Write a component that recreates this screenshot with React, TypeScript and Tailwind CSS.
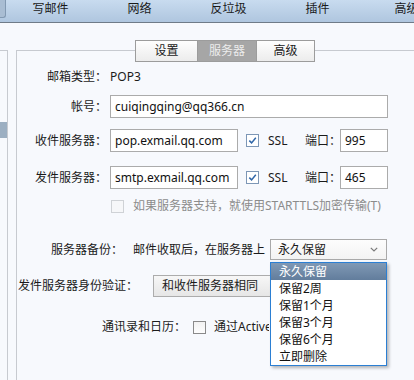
import React from "react";

function Check({ checked, disabled }: { checked?: boolean; disabled?: boolean }) {
  const cls = disabled
    ? "border-[#cfd2d6] bg-[#f6f7f9]"
    : checked
    ? "border-[#7d97b6] bg-white"
    : "border-[#8a8a8a] bg-gradient-to-b from-[#f2f2f2] to-[#fdfdfd]";
  return (
    <span className={`inline-flex h-[13px] w-[13px] shrink-0 items-center justify-center border ${cls}`}>
      {checked && (
        <svg width="9" height="9" viewBox="0 0 9 9">
          <path d="M1.3 4.6 L3.6 6.9 L7.8 1.8" stroke="#2f66a8" strokeWidth="1.5" fill="none" />
        </svg>
      )}
    </span>
  );
}

function Input({ w, value }: { w: string; value: string }) {
  return (
    <div className={`${w} flex h-[23px] shrink-0 items-center border border-[#ababab] bg-white pl-[4px] text-[12px] text-[#111]`}>
      {value}
    </div>
  );
}

export default function App() {
  const nav = ["写邮件", "网络", "反垃圾", "插件", "高级"];
  const options = ["永久保留", "保留2周", "保留1个月", "保留3个月", "保留6个月", "立即删除"];
  return (
    <div className="h-[380px] w-[414px] overflow-hidden bg-[#f7f9fd] font-['Noto_Sans','Noto_Sans_CJK_SC',sans-serif] text-[12px] text-[#1b1b1b]">
      {/* top bar */}
      <div className="flex h-[23px] border-b border-[#6f7b88] bg-gradient-to-b from-[#c8dbef] to-[#afc6df]">
        <div className="h-[18px] w-[6px] shrink-0 rounded-br-[3px] border-b border-r border-[#8299b2] bg-[#a9bdd3]" />
        {nav.map((t) => (
          <div key={t} className="w-[89px] shrink-0 whitespace-nowrap text-center text-[12px] leading-[18px] text-[#1a1a1a]">
            {t}
          </div>
        ))}
      </div>

      {/* body */}
      <div className="flex pt-[27px]">
        <div className="h-[340px] w-[8px] shrink-0 border-r border-t border-[#c7cad0]">
          <div className="mt-[71px] h-[16px] bg-[#9cafc2]" />
        </div>
        <div className="ml-[8px] h-[340px] flex-1 border-l border-t border-[#c7cad0]">
          {/* tabs */}
          <div className="-mt-[11px] ml-[118px] flex h-[22px] w-fit border border-[#9c9c9c]">
            <div className="flex w-[61px] items-center justify-center bg-gradient-to-b from-[#fefefe] to-[#ececec] text-[#1b1b1b]">设置</div>
            <div className="flex w-[59px] items-center justify-center border-l border-[#9c9c9c] bg-[#a6a6a6] text-[#ececec]">服务器</div>
            <div className="flex w-[58px] items-center justify-center border-l border-[#9c9c9c] bg-gradient-to-b from-[#fefefe] to-[#ececec] text-[#1b1b1b]">高级</div>
          </div>

          {/* row 1 */}
          <div className="mt-[5px] flex h-[20px] items-center">
            <div className="w-[90px] text-right">邮箱类型：</div>
            <div className="ml-[3px]">POP3</div>
          </div>

          {/* row 2 */}
          <div className="mt-[8px] flex h-[23px] items-center">
            <div className="w-[90px] text-right">帐号：</div>
            <div className="ml-[3px]">
              <Input w="w-[278px]" value="cuiqingqing@qq366.cn" />
            </div>
          </div>

          {/* row 3 */}
          <div className="mt-[11px] flex h-[23px] items-center">
            <div className="w-[90px] text-right">收件服务器：</div>
            <div className="ml-[3px]">
              <Input w="w-[128px]" value="pop.exmail.qq.com" />
            </div>
            <div className="ml-[8px] flex">
              <Check checked />
            </div>
            <div className="ml-[9px] w-[37px]">SSL</div>
            <div className="w-[35px] shrink-0 whitespace-nowrap">端口：</div>
            <Input w="w-[48px]" value="995" />
          </div>

          {/* row 4 */}
          <div className="mt-[14px] flex h-[23px] items-center">
            <div className="w-[90px] text-right">发件服务器：</div>
            <div className="ml-[3px]">
              <Input w="w-[128px]" value="smtp.exmail.qq.com" />
            </div>
            <div className="ml-[8px] flex">
              <Check checked />
            </div>
            <div className="ml-[9px] w-[37px]">SSL</div>
            <div className="w-[35px] shrink-0 whitespace-nowrap">端口：</div>
            <Input w="w-[48px]" value="465" />
          </div>

          {/* row 5 */}
          <div className="mt-[9px] flex h-[16px] items-center pl-[94px]">
            <Check disabled />
            <div className="ml-[9px] whitespace-nowrap text-[#8c8c8c]">如果服务器支持，就使用STARTTLS加密传输(T)</div>
          </div>

          {/* row 6 */}
          <div className="relative z-10 mt-[25px] flex h-[21px] items-center pl-[34px]">
            <div className="w-[82px] shrink-0 whitespace-nowrap">服务器备份：</div>
            <div className="w-[137px] shrink-0 whitespace-nowrap">邮件收取后，在服务器上</div>
            <div className="relative w-[117px] shrink-0">
              <div className="flex h-[21px] items-center justify-between border border-[#a9a9a9] bg-gradient-to-b from-[#fdfdfd] to-[#f3f3f3] pl-[7px] pr-[8px]">
                <span>永久保留</span>
                <svg width="8" height="5" viewBox="0 0 8 5">
                  <path d="M0.8 0.8 L4 4 L7.2 0.8" stroke="#7a7a7a" strokeWidth="1.2" fill="none" />
                </svg>
              </div>
              <div className="absolute left-0 top-[23px] w-[117px] border border-[#2b7fd3] bg-white shadow-[2px_2px_3px_rgba(0,0,0,0.28)]">
                {options.map((o, i) => (
                  <div
                    key={o}
                    className={
                      i === 0
                        ? "h-[17px] bg-gradient-to-b from-[#8099b5] to-[#627d9c] pl-[8px] leading-[17px] text-white"
                        : "h-[17px] pl-[8px] leading-[17px] text-[#111]"
                    }
                  >
                    {o}
                  </div>
                ))}
              </div>
            </div>
          </div>

          {/* row 7 */}
          <div className="mt-[15px] flex h-[22px] items-center pl-[1px]">
            <div className="w-[135px] shrink-0 whitespace-nowrap">发件服务器身份验证：</div>
            <div className="flex h-[22px] w-[234px] shrink-0 items-center overflow-hidden border border-[#acacac] bg-gradient-to-b from-[#f7f7f7] to-[#e6e6e6] pl-[8px]">
              <span className="w-[108px] shrink-0 overflow-hidden whitespace-nowrap">和收件服务器相同</span>
            </div>
          </div>

          {/* row 8 */}
          <div className="mt-[20px] flex h-[20px] items-center pl-[85px]">
            <div className="w-[91px] shrink-0 whitespace-nowrap">通讯录和日历：</div>
            <Check />
            <div className="ml-[8px] w-[55px] shrink-0 overflow-hidden whitespace-nowrap">通过ActiveSync同步</div>
          </div>
        </div>
      </div>
    </div>
  );
}
